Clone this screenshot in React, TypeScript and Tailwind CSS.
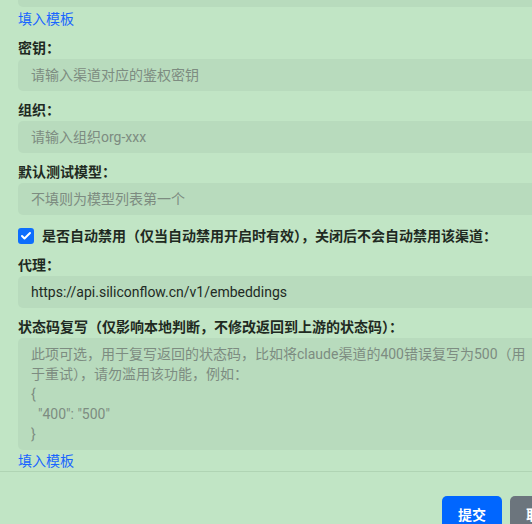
import { Check } from 'lucide-react'

const font = "font-['Roboto','Noto_Sans_CJK_SC',sans-serif]"

function Label({ children }: { children: React.ReactNode }) {
  return <div className="text-[14px] leading-5 font-bold text-[#1f2a22] mb-px">{children}</div>
}

function Field({ placeholder, value }: { placeholder?: string; value?: string }) {
  return (
    <input
      readOnly
      placeholder={placeholder}
      value={value ?? ''}
      className="block w-full h-8 px-[13px] rounded-[5px] bg-[#b8dbbd] text-[14px] leading-5 text-[#222a24] placeholder:text-[#7d8c81] outline-none"
    />
  )
}

function TemplateLink() {
  return <div className="text-[14px] leading-5 text-[#1a66ff]">填入模板</div>
}

export default function App() {
  const statusLines = [
    '此项可选，用于复写返回的状态码，比如将claude渠道的400错误复写为500（用',
    '于重试），请勿滥用该功能，例如：',
    '{',
    '  "400": "500"',
    '}',
  ]

  return (
    <div className={`w-[532px] h-[524px] overflow-hidden bg-[#c1e5c5] ${font}`}>
      <div className="w-[586px]">
        <div className="px-[18px]">
          <div className="-mt-[25px]">
            <Field />
          </div>
          <div className="mt-[2px]">
            <TemplateLink />
          </div>

          <div className="mt-[9px]">
            <Label>密钥：</Label>
            <Field placeholder="请输入渠道对应的鉴权密钥" />
          </div>

          <div className="mt-[9px]">
            <Label>组织：</Label>
            <Field placeholder="请输入组织org-xxx" />
          </div>

          <div className="mt-[9px]">
            <Label>默认测试模型：</Label>
            <Field placeholder="不填则为模型列表第一个" />
          </div>

          <div className="mt-[11px] flex items-center gap-2 h-5">
            <span className="w-4 h-4 rounded-[3px] bg-[#0d6efd] flex items-center justify-center">
              <Check className="w-3 h-3 text-white" strokeWidth={4} />
            </span>
            <span className="text-[14px] leading-5 font-bold text-[#1f2a22]">
              是否自动禁用（仅当自动禁用开启时有效），关闭后不会自动禁用该渠道：
            </span>
          </div>

          <div className="mt-[9px]">
            <Label>代理：</Label>
            <Field value="https://api.siliconflow.cn/v1/embeddings" />
          </div>

          <div className="mt-[9px]">
            <Label>状态码复写（仅影响本地判断，不修改返回到上游的状态码）：</Label>
            <div className="rounded-[5px] bg-[#b8dbbd] px-[13px] py-1.5 text-[14px] leading-5 text-[#7d8c81] whitespace-pre">
              {statusLines.map((l, i) => (
                <div key={i}>{l}</div>
              ))}
            </div>
          </div>
          <div className="mt-px">
            <TemplateLink />
          </div>
        </div>

        <div className="border-t border-[#b0d4b4] pt-6 pr-4 flex justify-end gap-2">
          <button className="h-[38px] px-4 rounded-[5px] bg-[#0066ff] text-white text-[14px] font-bold">提交</button>
          <button className="h-[38px] px-4 rounded-[5px] bg-[#6c757d] text-white text-[14px] font-bold">取消</button>
        </div>
      </div>
    </div>
  )
}
